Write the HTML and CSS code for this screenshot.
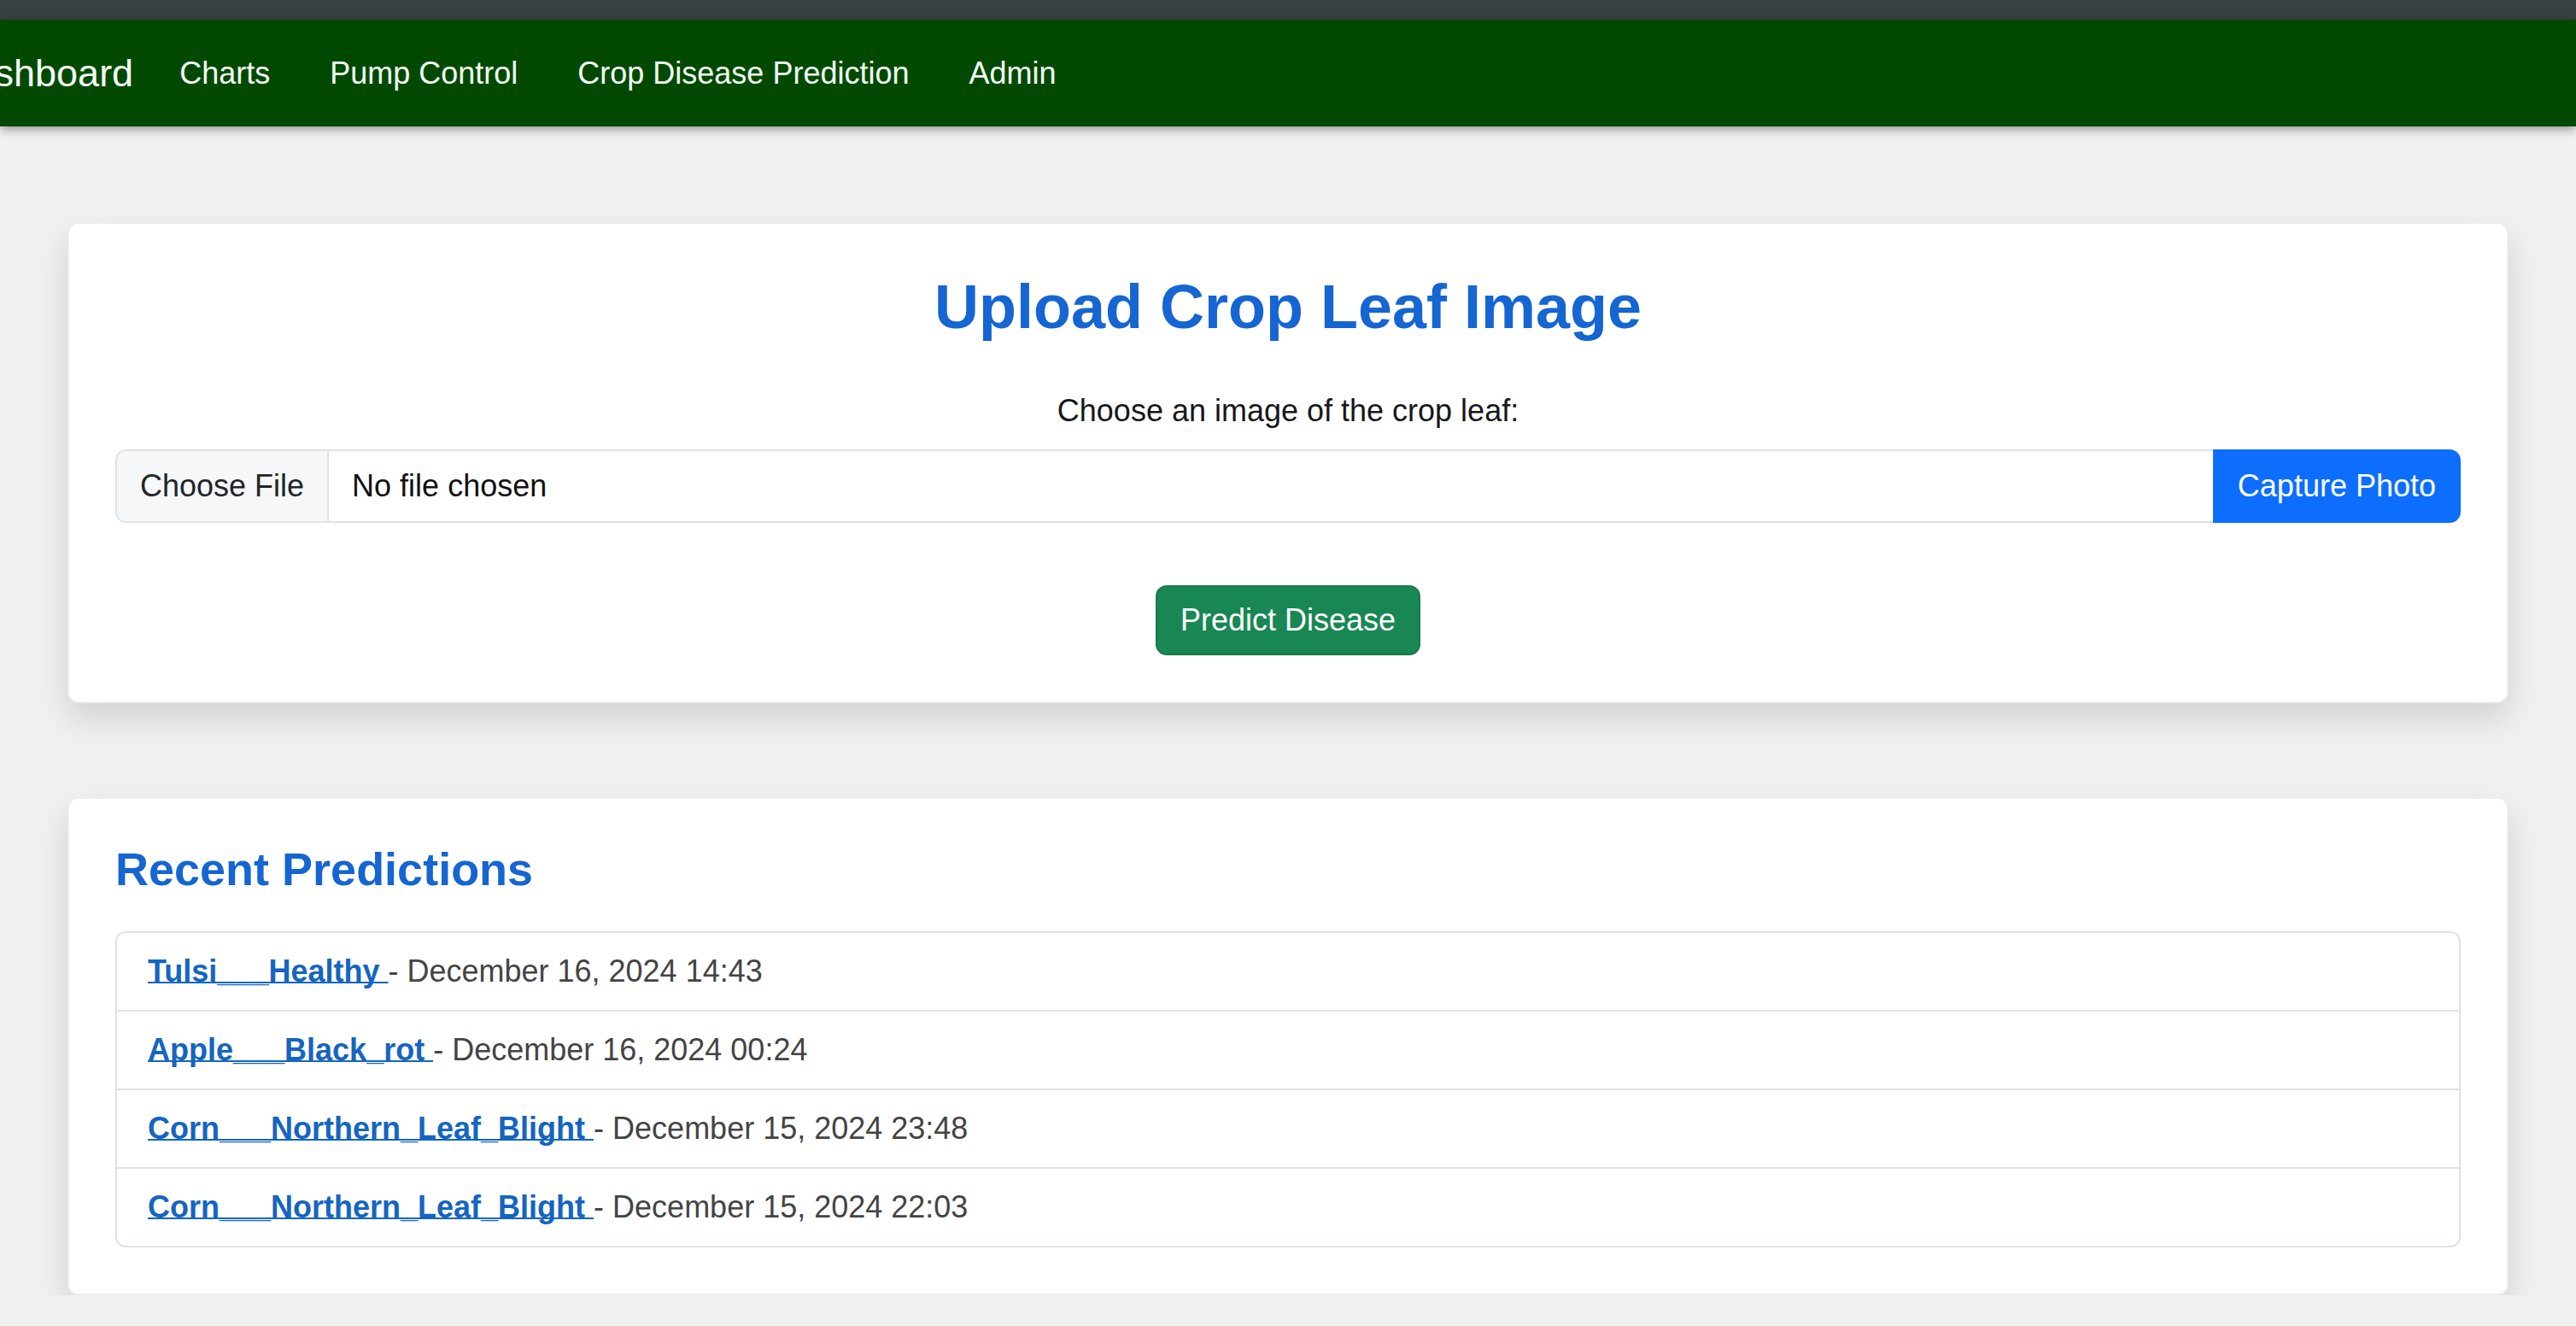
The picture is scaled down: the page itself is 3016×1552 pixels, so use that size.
FILE: index.html
```html
<!DOCTYPE html>
<html lang="en">
<head>
<meta charset="utf-8">
<title>Crop Disease Prediction</title>
<link rel="stylesheet" href="styles.css">
</head>
<body>
<div class="topstrip"></div>
<nav class="navbar">
  <a class="brand" href="#">Dashboard</a>
  <a class="nav-link" href="#">Charts</a>
  <a class="nav-link" href="#">Pump Control</a>
  <a class="nav-link" href="#">Crop Disease Prediction</a>
  <a class="nav-link" href="#">Admin</a>
</nav>
<main class="container">
  <section class="card">
    <h2 class="title">Upload Crop Leaf Image</h2>
    <form class="upload-form">
      <label class="form-label">Choose an image of the crop leaf:</label>
      <div class="input-group">
        <div class="file-input">
          <span class="file-btn">Choose File</span>
          <span class="file-name">No file chosen</span>
        </div>
        <span class="btn-capture">Capture Photo</span>
      </div>
      <div class="submit-row">
        <span class="btn-predict">Predict Disease</span>
      </div>
    </form>
  </section>
  <section class="card card-list">
    <h4 class="subtitle">Recent Predictions</h4>
    <ul class="list-group">
      <li class="list-item"><a class="pred-link" href="#">Tulsi___Healthy </a><span class="pred-date">- December 16, 2024 14:43</span></li>
      <li class="list-item"><a class="pred-link" href="#">Apple___Black_rot </a><span class="pred-date">- December 16, 2024 00:24</span></li>
      <li class="list-item"><a class="pred-link" href="#">Corn___Northern_Leaf_Blight </a><span class="pred-date">- December 15, 2024 23:48</span></li>
      <li class="list-item"><a class="pred-link" href="#">Corn___Northern_Leaf_Blight </a><span class="pred-date">- December 15, 2024 22:03</span></li>
    </ul>
  </section>
</main>
</body>
</html>
```

FILE: styles.css
```css
* { box-sizing: border-box; }

html, body {
  margin: 0;
  padding: 0;
}

body {
  background: #f0f0f0;
  font-family: "Liberation Sans", Arial, sans-serif;
  color: #212529;
  overflow: hidden;
}

.topstrip {
  height: 23px;
  background: #394043;
}

.navbar {
  height: 125px;
  background: #014901;
  display: flex;
  align-items: center;
  box-shadow: 0 4px 10px rgba(0, 0, 0, 0.35);
  position: relative;
  z-index: 1;
}

.brand {
  font-size: 45px;
  color: #f4fff4;
  text-decoration: none;
  margin-left: -64px;
  margin-right: 19px;
  white-space: nowrap;
}

.nav-link {
  font-size: 36px;
  color: #f4fff4;
  text-decoration: none;
  padding: 0 35px;
}

.container {
  padding: 112px 79px 0;
  display: flex;
  flex-direction: column;
  gap: 110px;
}

.card {
  background: #fff;
  border: 2px solid rgba(0, 0, 0, 0.07);
  border-radius: 13px;
  padding: 54px;
  box-shadow: 0 18px 36px rgba(0, 0, 0, 0.13);
}

.card-list {
  padding-top: 50px;
}

.title {
  margin: 0 0 52px;
  font-size: 72px;
  line-height: 1.2;
  font-weight: 700;
  text-align: center;
  color: #1565d2;
}

.upload-form {
  display: flex;
  flex-direction: column;
}

.form-label {
  font-size: 36px;
  line-height: 54px;
  text-align: center;
  margin-bottom: 18px;
  color: #16181a;
}

.input-group {
  display: flex;
  height: 86px;
}

.file-input {
  flex: 1;
  display: flex;
  align-items: stretch;
  border: 2px solid #dee2e6;
  border-right: 0;
  border-radius: 13px 0 0 13px;
  font-size: 36px;
  overflow: hidden;
}

.file-btn {
  display: flex;
  align-items: center;
  padding: 0 27px;
  background: #f6f7f8;
  border-right: 2px solid #dee2e6;
  color: #212529;
}

.file-name {
  display: flex;
  align-items: center;
  padding: 0 27px;
  color: #111;
}

.btn-capture {
  display: flex;
  align-items: center;
  padding: 0 29px;
  background: #0d6efd;
  color: #fff;
  font-size: 36px;
  border-radius: 0 13px 13px 0;
}

.submit-row {
  margin-top: 73px;
  display: flex;
  justify-content: center;
}

.btn-predict {
  font-size: 36px;
  line-height: 54px;
  padding: 12px 27px;
  background: #198754;
  border: 2px solid #167a4b;
  color: #fff;
  border-radius: 13px;
}

.subtitle {
  margin: 0 0 40px;
  font-size: 54px;
  line-height: 1.2;
  font-weight: 700;
  color: #1565d2;
}

.list-group {
  list-style: none;
  margin: 0;
  padding: 0;
  border: 2px solid #dee2e6;
  border-radius: 12px;
}

.list-item {
  padding: 18px 36px;
  font-size: 36px;
  line-height: 54px;
  border-bottom: 2px solid #dee2e6;
}

.list-item:last-child {
  border-bottom: 0;
}

.pred-link {
  color: #1565c0;
  font-weight: 700;
  text-decoration: underline;
  text-decoration-thickness: 2px;
  text-underline-offset: 0px;
  text-decoration-skip-ink: none;
}

.pred-date {
  color: #444;
}
```
